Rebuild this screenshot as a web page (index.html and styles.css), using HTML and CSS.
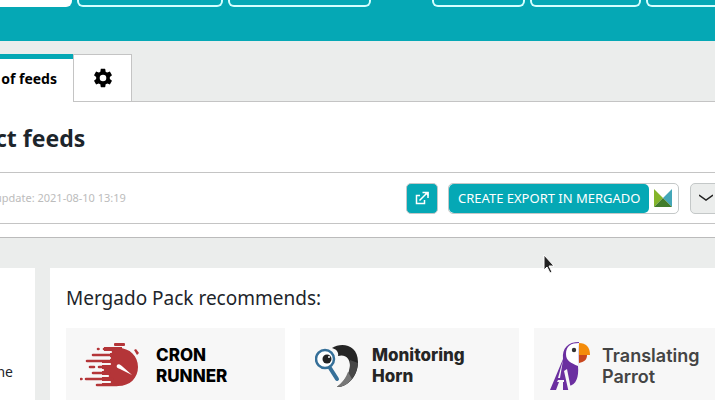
FILE: index.html
```
<!DOCTYPE html>
<html lang="en">
<head>
    <meta charset="UTF-8">
    <meta name="viewport" content="width=device-width, initial-scale=1.0">
    <title>Feeds</title>
    <link rel="stylesheet" href="styles.css">
</head>
<body>
    <header class="topbar">
        <nav class="topnav" aria-label="Main">
            <a href="#" class="nav-item active"></a>
            <a href="#" class="nav-item wide"></a>
            <a href="#" class="nav-item medium"></a>
        </nav>
        <nav class="topnav" aria-label="User">
            <a href="#" class="nav-item small"></a>
            <a href="#" class="nav-item"></a>
            <a href="#" class="nav-item"></a>
        </nav>
    </header>

    <nav class="tabs">
        <a href="#" class="tab current">of feeds</a>
        <a href="#" class="tab settings" aria-label="Settings">
            <svg width="22" height="22" viewBox="0 0 24 24"><path d="M19.43 12.98c.04-.32.07-.64.07-.98s-.03-.66-.07-.98l2.11-1.65c.19-.15.24-.42.12-.64l-2-3.46c-.12-.22-.39-.3-.61-.22l-2.49 1c-.52-.4-1.08-.73-1.69-.98l-.38-2.65A.49.49 0 0 0 14 2h-4c-.25 0-.46.18-.49.42l-.38 2.65c-.61.25-1.17.59-1.69.98l-2.49-1c-.23-.09-.49 0-.61.22l-2 3.46c-.13.22-.07.49.12.64l2.11 1.65c-.04.32-.07.65-.07.98s.03.66.07.98l-2.11 1.65c-.19.15-.24.42-.12.64l2 3.46c.12.22.39.3.61.22l2.49-1c.52.4 1.08.73 1.69.98l.38 2.65c.03.24.24.42.49.42h4c.25 0 .46-.18.49-.42l.38-2.65c.61-.25 1.17-.59 1.69-.98l2.49 1c.23.09.49 0 .61-.22l2-3.46c.12-.22.07-.49-.12-.64zM12 15.6a3.6 3.6 0 1 1 0-7.2 3.6 3.6 0 0 1 0 7.2z"/></svg>
        </a>
    </nav>

    <section class="feeds">
        <h1>ct feeds</h1>
        <div class="feed-row">
            <span class="updated">update: 2021-08-10 13:19</span>
            <button type="button" class="btn open" aria-label="Open">
                <svg width="14" height="14" viewBox="0 0 14 14" fill="none" stroke="#fff" stroke-width="1.5"><path d="M5 4.5H1.5v8h8V9M4.500 9.500l7-7M7.500 1.500H13V7"/><path d="M9 1h4.500v4.500z" fill="#fff" stroke="none"/></svg>
            </button>
            <button type="button" class="btn export">
                <span class="export-label">CREATE EXPORT IN MERGADO</span>
                <svg width="18" height="18" viewBox="0 0 18 18"><path d="M0 0l9 9-9 9z" fill="#84b52b"/><path d="M18 0L9 9l9 9z" fill="#43a7b8"/><path d="M9 9l9 9H0z" fill="#427c2b"/></svg>
            </button>
            <button type="button" class="btn more" aria-label="More">
                <svg width="14" height="8" viewBox="0 0 14 8" fill="none" stroke="#222" stroke-width="1.5"><path d="M0 1l7 5 7-5"/></svg>
            </button>
        </div>
    </section>

    <main class="content">
        <aside class="panel side">
            <p>ne</p>
        </aside>
        <section class="panel recommends">
            <h2>Mergado Pack recommends:</h2>
            <div class="apps">
                <a href="#" class="app cron">
                    <svg width="62" height="46" viewBox="0 0 62 46">
                        <g fill="#b43538">
                            <path d="M30 5h8c12 0 20 8 20 19s-8 19-20 19H22V19h8z"/>
                            <rect x="34" y="0" width="11" height="3" rx="1"/>
                            <path d="M54 7l2-1 3 4-2 2z"/>
                            <path d="M24 4h18v4H24z"/>
                        </g>
                        <g stroke="#b43538" stroke-width="2.6" stroke-linecap="round">
                            <path d="M18 6h.5M24 6h14M13 12h19M7 18h24M10 24h4M19 24h13M13 30h16M6 36h26M1 36h.5M17 42h20"/>
                        </g>
                        <path d="M20 9h11M16 15h14M11 21h19M15 27h8M19 33h9M15 39h15" stroke="#f7f7f7" stroke-width="2.2" stroke-linecap="round"/>
                        <path d="M37 22c2-2 4 0 6 2l9 8-12-6c-3-1-4-2-3-4z" fill="#fff"/>
                    </svg>
                    <span>CRON<br>RUNNER</span>
                </a>
                <a href="#" class="app horn">
                    <svg width="44" height="44" viewBox="0 0 44 44">
                        <path d="M17 4C26-2 43 0 43 18c0 14-10 25-21 25 8-6 13-13 13-21 0-8-5-12-12-10 1-4-2-7-6-8z" fill="#252525"/>
                        <path d="M35 16l8 3c-1 14-11 24-21 24 9-6 14-16 13-27z" fill="#484848"/>
                        <path d="M33 28l4 7c-4 5-9 8-15 8 5-4 9-9 11-15z" fill="#777"/>
                        <circle cx="10" cy="15" r="9" fill="#fff" stroke="#356f98" stroke-width="2.5"/>
                        <path d="M15 24l7 11" stroke="#356f98" stroke-width="4" stroke-linecap="round"/>
                        <circle cx="12" cy="15" r="4.5" fill="#222"/><circle cx="14" cy="13" r="1" fill="#fff"/>
                    </svg>
                    <span>Monitoring<br>Horn</span>
                </a>
                <a href="#" class="app parrot">
                    <svg width="41" height="48" viewBox="0 0 41 48">
                        <path d="M29 0C18 0 12 6 13 17L0 48h6l3-8h4v8h5l1-4c7-1 10-9 9-20z" fill="#6b2fa0"/>
                        <path d="M29 1c-8 0-13 3-13 11 0 7 5 9 12 12z" fill="#fff"/>
                        <path d="M13 18L8 36h2zM14 29l4 18h3l-4-20zM8 38h6v2H7z" fill="#f7f7f7"/>
                        <path d="M29 1c7 0 11 4 11 12H29z" fill="#f48c0a"/>
                        <path d="M29 13h8c0 5-3 7-8 8z" fill="#c9471e"/>
                        <circle cx="24" cy="8" r="2.2" fill="#333"/>
                    </svg>
                    <span>Translating<br>Parrot</span>
                </a>
            </div>
        </section>
    </main>

    <svg class="cursor" width="12" height="20" viewBox="0 0 12 20"><path d="M1 1v15l3-3 3 6 2-1-3-6h5z" fill="#222" stroke="#fff"/></svg>
</body>
</html>
```
FILE: styles.css
```
* { box-sizing: border-box; }
body { margin: 0; min-height: 100vh; display: flex; flex-direction: column; overflow: hidden; background-color: #ebedec; color: #1d252b; font-family: "Noto Sans", "Open Sans", sans-serif; }
a { color: inherit; text-decoration: none; }
button { font: inherit; cursor: pointer; }
svg { flex: none; display: block; }

.topbar { display: flex; gap: 61px; height: 41px; background-color: #05a8b5; overflow: hidden; }
.topnav { display: flex; gap: 5px; flex: none; }
.nav-item { width: 111px; height: 7px; border: 2px solid #d5ffff; border-top: none; border-radius: 0 0 6px 6px; }
.nav-item.active { width: 72px; background-color: #fff; border-color: #fff; border-bottom-left-radius: 0; }
.nav-item.wide { width: 146px; }
.nav-item.medium { width: 143px; }
.nav-item.small { width: 93px; }

/* tabs sit on the top border of the white section */
.tabs { display: flex; margin-top: 13px; }
.tab { height: 48px; margin-bottom: -1px; background-color: #fff; display: flex; align-items: center; justify-content: center; }
.tab.current { width: 73px; padding: 0 16px 5px 0; justify-content: flex-end; border-top: 5px solid #05a8b5; color: #000; font-size: 14px; font-weight: bold; white-space: nowrap; position: relative; }
.tab.settings { width: 59px; border: 1px solid #c4c4c4; }

.feeds { background-color: #fff; border-top: 1px solid #c4c4c4; border-bottom: 1px solid #bbb; padding-bottom: 13px; }
h1 { margin: 0 0 0 -5px; padding: 19px 0 17px; font-size: 23px; line-height: 34px; }
.feed-row { display: flex; align-items: center; height: 52px; border-top: 1px solid #c4c4c4; border-bottom: 1px solid #c4c4c4; overflow: hidden; }
.updated { margin: 0 auto 0 -5px; color: #bcbcbc; font-size: 11px; line-height: 16px; white-space: nowrap; }
.btn { flex: none; display: flex; align-items: center; justify-content: center; height: 31px; padding: 0; border: 1px solid #c4c8c8; border-radius: 5px; }
.open { width: 32px; margin-right: 10px; background-color: #05a8b5; }
.export { width: 231px; margin-right: 11px; justify-content: space-between; padding-right: 6px; background-color: #fff; }
.export-label { padding: 0 8px 0 9px; border-radius: 5px; background-color: #05a8b5; color: #fff; font-size: 13px; line-height: 29px; white-space: nowrap; }
.more { width: 31px; margin-right: -6px; background-color: #ebedec; }

.content { flex: 1; display: flex; gap: 15px; margin-top: 30px; }
.panel { background-color: #fff; }
.side { flex: none; width: 35px; padding-top: 94px; font-size: 14px; line-height: 20px; }
.side p { width: 13px; margin: 0; display: flex; justify-content: flex-end; }
.recommends { flex: 1; min-width: 0; padding: 15px 0 0 16px; overflow: hidden; }
h2 { margin: 0 0 15px; font-size: 19px; font-weight: normal; line-height: 30px; }
.apps { display: flex; gap: 15px; }
.app { flex: none; width: 219px; height: 76px; display: flex; align-items: center; background-color: #f7f7f7; font-family: Inter, sans-serif; font-size: 17px; font-weight: 800; line-height: 21px; }
.cron { gap: 14px; padding-left: 14px; color: #000; }
.horn { gap: 13px; padding-left: 15px; color: #252525; }
.parrot { gap: 11px; padding-left: 16px; color: #444; font-size: 18px; font-weight: 600; }

.cursor { position: absolute; left: 543px; top: 254px; }
```
